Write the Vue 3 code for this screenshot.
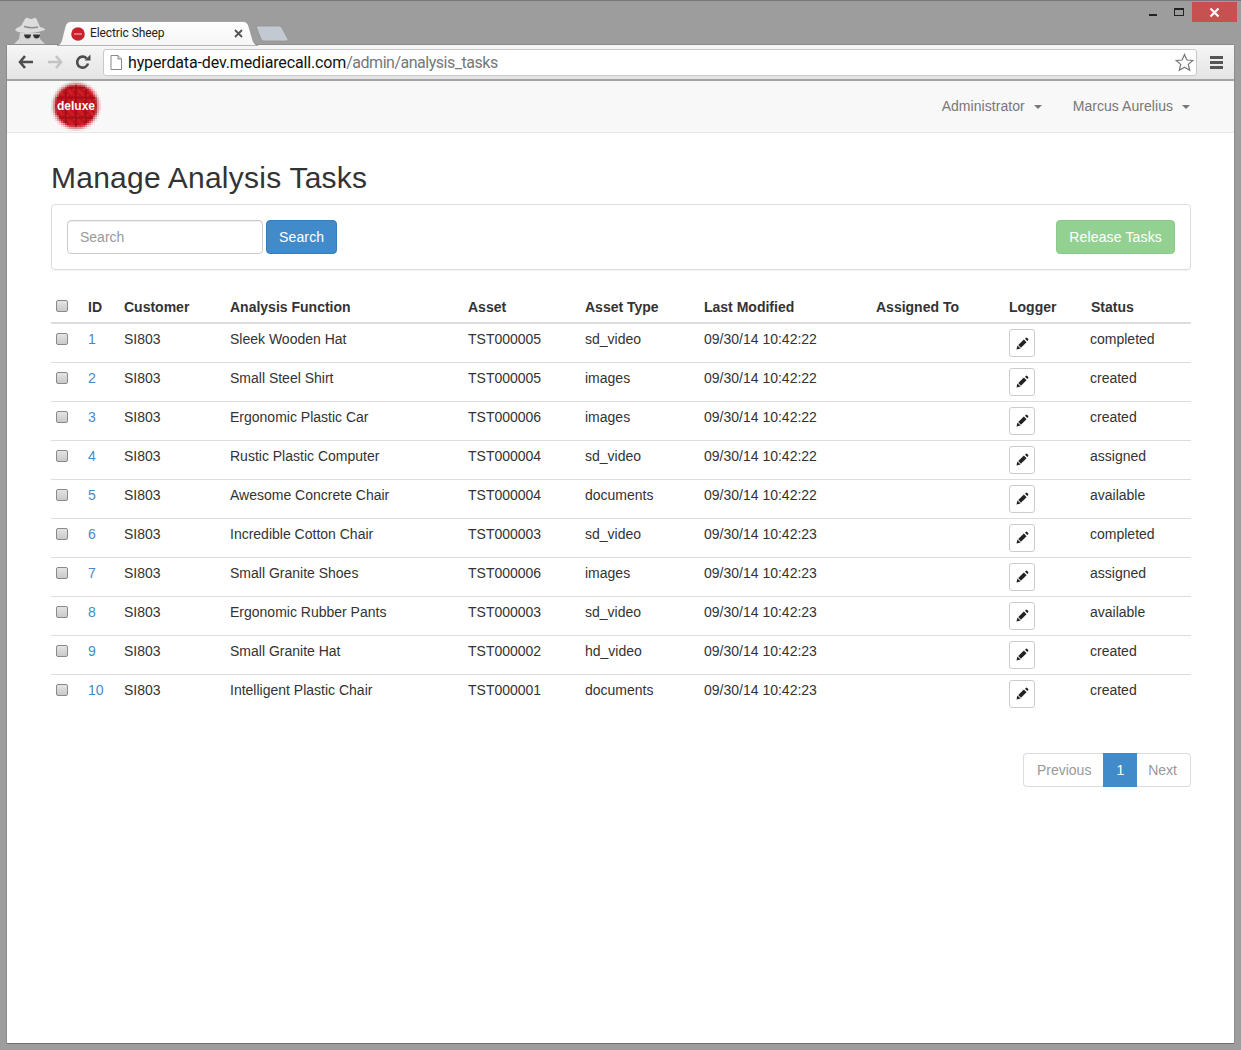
<template>
	<div class="window">
		<div class="caption">
			<span class="cap-btn"><i class="min"></i></span>
			<span class="cap-btn"><i class="max"></i></span>
			<span class="cap-close">
				<svg width="11" height="11" viewBox="0 0 11 11"><path d="M1.5 1.5 L9.5 9.5 M9.5 1.5 L1.5 9.5" stroke="#fff" stroke-width="2.2" /></svg>
			</span>
		</div>

		<div class="tabstrip">
			<svg class="spy" width="34" height="28" viewBox="0 0 34 28">
				<path d="M7 16 L27 16 L27 22 L33 28 L0 28 L6 22 Z" fill="#d6d6d6" />
				<path d="M8 9 L12 2 Q13 0 16 1.500 Q19 2.500 21 1 Q23 0 24 3 L27 10 Q32 11 32 13 Q24 16 14 16 Q4 16 2 13 Q3 11 8 9 Z" fill="#dcdcdc" />
				<path d="M11 9.500 Q18 11.500 25 10" fill="none" stroke="#8f8f8f" stroke-width="1.500" />
				<path d="M11 17.500 L18 17.500 Q18 21.500 14.500 21.500 Q11.500 21.500 11 17.500 Z M20 17.500 L27 17.500 Q27 21.500 23.500 21.500 Q20.500 21.500 20 17.500 Z" fill="#333" />
			</svg>
			<div class="tab">
				<svg class="tab-shape" width="202" height="25" viewBox="0 0 202 25">
					<defs>
						<linearGradient id="tabfill" x1="0" y1="0" x2="0" y2="1">
							<stop offset="0" stop-color="#ffffff" />
							<stop offset="1" stop-color="#f5f5f5" />
						</linearGradient>
					</defs>
					<path d="M0 24.500 Q3 24 4.500 20 L8 6 Q9.500 .5 14 .5 L186 .5 Q190.500 .5 192 6 L196 20 Q197.500 24 201 24.500 Z" fill="url(#tabfill)" stroke="#8a8a8a" stroke-width="0.6" />
				</svg>
				<svg class="favicon" width="14" height="14" viewBox="0 0 14 14">
					<circle cx="7" cy="7" r="6.800" fill="#c8202c" />
					<rect x="3" y="6.300" width="8" height="1.400" fill="#e89a9a" />
				</svg>
				<span class="tab-title">Electric Sheep</span>
				<svg class="tab-x" width="9" height="9" viewBox="0 0 9 9"><path d="M1 1 L8 8 M8 1 L1 8" stroke="#555" stroke-width="1.8" /></svg>
			</div>
			<svg class="newtab" width="34" height="17" viewBox="0 0 34 17">
				<path d="M1 1 L24 1 Q26 1 27 3 L33 14 Q33.500 16 31 16 L9 16 Q7 16 6 14 Z" fill="#c3c9d2" stroke="#8c8c8c" stroke-width="0.7" />
			</svg>
		</div>

		<div class="frame">
			<div class="toolbar">
				<svg class="tb-icon" width="16" height="14" viewBox="0 0 16 14"><path d="M7 1 L2 7 L7 13 M2 7 L15 7" fill="none" stroke="#4e4e4e" stroke-width="2.6" /></svg>
				<svg class="tb-icon" width="16" height="14" viewBox="0 0 16 14"><path d="M9 1 L14 7 L9 13 M14 7 L1 7" fill="none" stroke="#c4c4c4" stroke-width="2.6" /></svg>
				<svg class="tb-icon reload" width="16" height="16" viewBox="0 0 16 16">
					<path d="M13 9.500 A5.500 5.500 0 1 1 11.600 4.300" fill="none" stroke="#4e4e4e" stroke-width="2.6" />
					<path d="M9.500 6.500 L15.500 6.500 L15.500 0.500 Z" fill="#4e4e4e" />
				</svg>
				<div class="omnibox">
					<svg width="12" height="15" viewBox="0 0 12 15">
						<path d="M1 .5 L8 .5 L11.500 4 L11.500 14.500 L1 14.500 Z" fill="#fff" stroke="#888" />
						<path d="M8 .5 L8 4 L11.500 4" fill="#ddd" stroke="#888" />
					</svg>
					<span class="url"><span class="host">hyperdata-dev.mediarecall.com</span>/admin/analysis_tasks</span>
					<svg class="star" width="19" height="19" viewBox="0 0 19 19">
						<path d="M9.500 1.500 L11.900 7 L17.800 7.500 L13.300 11.400 L14.700 17.300 L9.500 14.200 L4.300 17.300 L5.700 11.400 L1.200 7.500 L7.100 7 Z" fill="#fff" stroke="#777" stroke-width="1.2" />
					</svg>
				</div>
				<span class="menu"><i></i><i></i><i></i></span>
			</div>

			<nav class="navbar">
				<svg class="logo" width="50" height="50" viewBox="0 0 50 50">
					<circle v-for="d in logoDots" :key="d.id" :cx="d.x" :cy="d.y" :r="d.r" :fill="d.color" />
					<text x="25" y="29" text-anchor="middle" class="logo-text">deluxe</text>
				</svg>
				<div class="nav-right">
					<a class="nav-link">Administrator <b class="caret"></b></a>
					<a class="nav-link">Marcus Aurelius <b class="caret"></b></a>
				</div>
			</nav>

			<main class="content">
				<h2>Manage Analysis Tasks</h2>
				<div class="panel">
					<div class="search">
						<input class="search-input" type="text" placeholder="Search" />
						<button class="btn primary">Search</button>
					</div>
					<button class="btn release">Release Tasks</button>
				</div>

				<table class="tasks">
					<colgroup>
						<col v-for="w in colWidths" :key="w.name" :style="{ width: w.width + 'px' }" />
					</colgroup>
					<thead>
						<tr>
							<th><input class="check" type="checkbox" /></th>
							<th>ID</th>
							<th>Customer</th>
							<th>Analysis Function</th>
							<th>Asset</th>
							<th>Asset Type</th>
							<th>Last Modified</th>
							<th>Assigned To</th>
							<th>Logger</th>
							<th class="status-head">Status</th>
						</tr>
					</thead>
					<tbody>
						<tr v-for="t in tasks" :key="t.id">
							<td><input class="check" type="checkbox" /></td>
							<td><a class="id-link">{{ t.id }}</a></td>
							<td>SI803</td>
							<td>{{ t.fn }}</td>
							<td>{{ t.asset }}</td>
							<td>{{ t.type }}</td>
							<td>{{ t.modified }}</td>
							<td></td>
							<td>
								<button class="edit">
									<svg width="13" height="13" viewBox="0 0 13 13">
										<path d="M3.600 9.400 L9.200 3.800" stroke="#222" stroke-width="3.800" />
										<path d="M0.500 12.500 L1.400 8.400 L4.600 11.600 Z" fill="#222" />
										<path d="M9.800 .9 Q10.500 .3 11.200 .9 L12.100 1.800 Q12.700 2.500 12.100 3.200 L11.300 4 L9 1.700 Z" fill="#222" />
									</svg>
								</button>
							</td>
							<td>{{ t.status }}</td>
						</tr>
					</tbody>
				</table>

				<div class="pager">
					<span class="page first">Previous</span>
					<span class="page current">1</span>
					<span class="page last">Next</span>
				</div>
			</main>
		</div>
	</div>
</template>

<script setup>
const colWidths = [
	{ name: 'check', width: 29 },
	{ name: 'id', width: 36 },
	{ name: 'customer', width: 106 },
	{ name: 'fn', width: 238 },
	{ name: 'asset', width: 117 },
	{ name: 'type', width: 119 },
	{ name: 'modified', width: 172 },
	{ name: 'assigned', width: 133 },
	{ name: 'logger', width: 81 },
	{ name: 'status', width: 109 },
]

const tasks = [
	{ id: 1, fn: 'Sleek Wooden Hat', asset: 'TST000005', type: 'sd_video', modified: '09/30/14 10:42:22', status: 'completed' },
	{ id: 2, fn: 'Small Steel Shirt', asset: 'TST000005', type: 'images', modified: '09/30/14 10:42:22', status: 'created' },
	{ id: 3, fn: 'Ergonomic Plastic Car', asset: 'TST000006', type: 'images', modified: '09/30/14 10:42:22', status: 'created' },
	{ id: 4, fn: 'Rustic Plastic Computer', asset: 'TST000004', type: 'sd_video', modified: '09/30/14 10:42:22', status: 'assigned' },
	{ id: 5, fn: 'Awesome Concrete Chair', asset: 'TST000004', type: 'documents', modified: '09/30/14 10:42:22', status: 'available' },
	{ id: 6, fn: 'Incredible Cotton Chair', asset: 'TST000003', type: 'sd_video', modified: '09/30/14 10:42:23', status: 'completed' },
	{ id: 7, fn: 'Small Granite Shoes', asset: 'TST000006', type: 'images', modified: '09/30/14 10:42:23', status: 'assigned' },
	{ id: 8, fn: 'Ergonomic Rubber Pants', asset: 'TST000003', type: 'sd_video', modified: '09/30/14 10:42:23', status: 'available' },
	{ id: 9, fn: 'Small Granite Hat', asset: 'TST000002', type: 'hd_video', modified: '09/30/14 10:42:23', status: 'created' },
	{ id: 10, fn: 'Intelligent Plastic Chair', asset: 'TST000001', type: 'documents', modified: '09/30/14 10:42:23', status: 'created' },
]

// halftone logo: dots shrink toward the rim, a few darker ones for the mottled look
const logoColors = ['#c9161f', '#c9161f', '#b5121c', '#d3222a', '#a30f19']
const logoDots = []
for (let y = 0; y < 25; y++) {
	for (let x = 0; x < 25; x++) {
		const cx = x * 2 + 1
		const cy = y * 2 + 1
		const dist = Math.hypot(cx - 25, cy - 25)
		if (dist > 25.5) continue
		const r = dist < 18 ? 1.45 : 1.45 * (1 - (dist - 18) / 9)
		const color = logoColors[(x * 7 + y * 13 + x * y) % logoColors.length]
		logoDots.push({ id: x + '-' + y, x: cx, y: cy, r, color })
	}
}
</script>

<style>
body {
	margin: 0;
	background: #9d9d9d;
}
</style>

<style scoped>
.window {
	position: relative;
	box-sizing: border-box;
	height: 1050px;
	padding: 0 7px 7px;
	background: #9d9d9d;
	border-top: 1px solid #777;
	display: flex;
	flex-direction: column;
	font-family: "Liberation Sans", Arial, sans-serif;
	font-size: 14px;
	color: #333;
}

.caption {
	position: absolute;
	top: 1px;
	right: 4px;
	display: flex;
	height: 20px;
}

.cap-btn {
	width: 26px;
	display: flex;
	align-items: center;
	justify-content: center;
}

.cap-btn .min {
	width: 8px;
	height: 2px;
	margin-top: 6px;
	background: #222;
}

.cap-btn .max {
	box-sizing: border-box;
	width: 10px;
	height: 8px;
	border: 1px solid #222;
	border-top-width: 2px;
}

.cap-close {
	width: 45px;
	background: #c75050;
	display: flex;
	align-items: center;
	justify-content: center;
}

.tabstrip {
	height: 44px;
	flex: none;
	display: flex;
	align-items: flex-end;
}

.spy {
	margin: 0 0 0 6px;
	flex: none;
}

.tab {
	position: relative;
	width: 202px;
	height: 25px;
	margin-left: 10px;
	margin-bottom: -1px;
	display: flex;
	align-items: center;
	flex: none;
}

.tab-shape {
	position: absolute;
	left: 0;
	top: 0;
}

.favicon {
	position: relative;
	margin-left: 14px;
}

.tab-title {
	position: relative;
	margin-left: 5px;
	margin-top: -2px;
	font-family: Roboto, sans-serif;
	font-size: 12px;
	letter-spacing: -.1px;
	color: #222;
}

.tab-x {
	position: absolute;
	left: 177px;
	top: 8px;
}

.newtab {
	margin-left: -4px;
	margin-bottom: 3px;
	flex: none;
}

.frame {
	flex: 1;
	display: flex;
	flex-direction: column;
	background: #fff;
	box-shadow: 0 1px 0 #6f6f6f, 0 0 0 1px #8c8c8c;
	border-radius: 2px 2px 0 0;
	min-height: 0;
}

.toolbar {
	height: 36px;
	flex: none;
	box-sizing: border-box;
	display: flex;
	align-items: center;
	padding: 0 11px;
	background: linear-gradient(#f6f6f6, #e4e4e4);
	border-bottom: 2px solid #a3a3a3;
}

.tb-icon {
	margin-right: 13px;
	flex: none;
}

.reload {
	margin-left: -1px;
	margin-right: 12px;
}

.omnibox {
	flex: 1;
	box-sizing: border-box;
	height: 27px;
	display: flex;
	align-items: center;
	gap: 6px;
	padding: 0 2px 0 6px;
	background: #fff;
	border: 1px solid #c9c9c9;
	border-radius: 3px;
}

.url {
	flex: 1;
	font-family: Roboto, sans-serif;
	font-size: 16px;
	letter-spacing: -.48px;
	color: #777;
	white-space: nowrap;
}

.host {
	letter-spacing: -.14px;
	color: #111;
}

.menu {
	width: 13px;
	margin-left: 13px;
	display: flex;
	flex-direction: column;
	gap: 2px;
	flex: none;
}

.menu i {
	height: 3px;
	background: #555;
}

.navbar {
	height: 52px;
	flex: none;
	box-sizing: border-box;
	display: flex;
	align-items: center;
	justify-content: space-between;
	padding: 0 44px 0 44px;
	background: #f8f8f8;
	border-bottom: 1px solid #e7e7e7;
}

.logo {
	margin-top: -1px;
	overflow: visible;
}

.logo-text {
	font-family: "Liberation Sans", Arial, sans-serif;
	font-weight: 700;
	font-size: 12px;
	fill: #fff;
}

.nav-right {
	display: flex;
	gap: 31px;
	padding-bottom: 2px;
}

.nav-link {
	color: #777;
	letter-spacing: .05px;
}

.caret {
	display: inline-block;
	width: 0;
	height: 0;
	margin-left: 5px;
	vertical-align: middle;
	border-top: 4px solid #777;
	border-left: 4px solid transparent;
	border-right: 4px solid transparent;
}

.content {
	flex: 1;
	padding: 0 43px 0 44px;
}

h2 {
	margin: 27px 0 8px;
	font-size: 30px;
	font-weight: 500;
	line-height: 36px;
	letter-spacing: .24px;
	color: #333;
}

.panel {
	box-sizing: border-box;
	height: 66px;
	display: flex;
	align-items: center;
	justify-content: space-between;
	padding: 0 15px;
	border: 1px solid #ddd;
	border-radius: 4px;
	box-shadow: 0 1px 1px rgba(0, 0, 0, .05);
}

.search {
	display: flex;
	gap: 3px;
}

.search-input {
	box-sizing: border-box;
	width: 196px;
	height: 34px;
	padding: 6px 12px;
	font: inherit;
	color: #555;
	background: #fff;
	border: 1px solid #ccc;
	border-radius: 4px;
	box-shadow: inset 0 1px 1px rgba(0, 0, 0, .075);
}

.search-input::placeholder {
	color: #999;
}

.btn {
	box-sizing: border-box;
	height: 34px;
	padding: 6px 12px;
	font: inherit;
	letter-spacing: .15px;
	color: #fff;
	border: 1px solid transparent;
	border-radius: 4px;
}

.primary {
	background: #428bca;
	border-color: #357ebd;
}

.release {
	background: #93d193;
	border-color: #8acb8a;
}

.tasks {
	width: 1140px;
	margin-top: 20px;
	table-layout: fixed;
	border-collapse: collapse;
}

.tasks th {
	box-sizing: border-box;
	height: 33px;
	padding: 9px 8px 7px;
	text-align: left;
	font-weight: 700;
	color: #333;
	border-bottom: 2px solid #ddd;
}

.tasks th:first-child,
.tasks td:first-child {
	padding-left: 5px;
}

.tasks th.status-head {
	padding-left: 9px;
}

.tasks td {
	box-sizing: border-box;
	height: 39px;
	padding: 5px 8px 0;
	vertical-align: top;
	border-top: 1px solid #ddd;
	line-height: 20px;
}

.tasks tbody tr:first-child td {
	border-top: 0;
}

.check {
	appearance: none;
	display: block;
	box-sizing: border-box;
	width: 12px;
	height: 12px;
	margin: 4px 0 0;
	background: linear-gradient(#e4e4e4, #c9c9c9);
	border: 1px solid #8a8a8a;
	border-radius: 2px;
}

.tasks th .check {
	margin-top: -3px;
}

.id-link {
	color: #428bca;
}

.edit {
	box-sizing: border-box;
	display: flex;
	align-items: center;
	justify-content: center;
	width: 26px;
	height: 28px;
	padding: 0;
	background: #fff;
	border: 1px solid #ccc;
	border-radius: 3px;
}

.pager {
	display: flex;
	justify-content: flex-end;
	margin-top: 40px;
}

.page {
	box-sizing: border-box;
	height: 34px;
	line-height: 20px;
	color: #999;
	background: #fff;
	border: 1px solid #ddd;
}

.first {
	padding: 6px 12px 6px 13px;
	border-radius: 4px 0 0 4px;
	border-right: 0;
}

.current {
	padding: 7px 13px;
	color: #fff;
	background: #428bca;
	border: 0;
}

.last {
	padding: 6px 13px 6px 11px;
	border-radius: 0 4px 4px 0;
	border-left: 0;
}
</style>
